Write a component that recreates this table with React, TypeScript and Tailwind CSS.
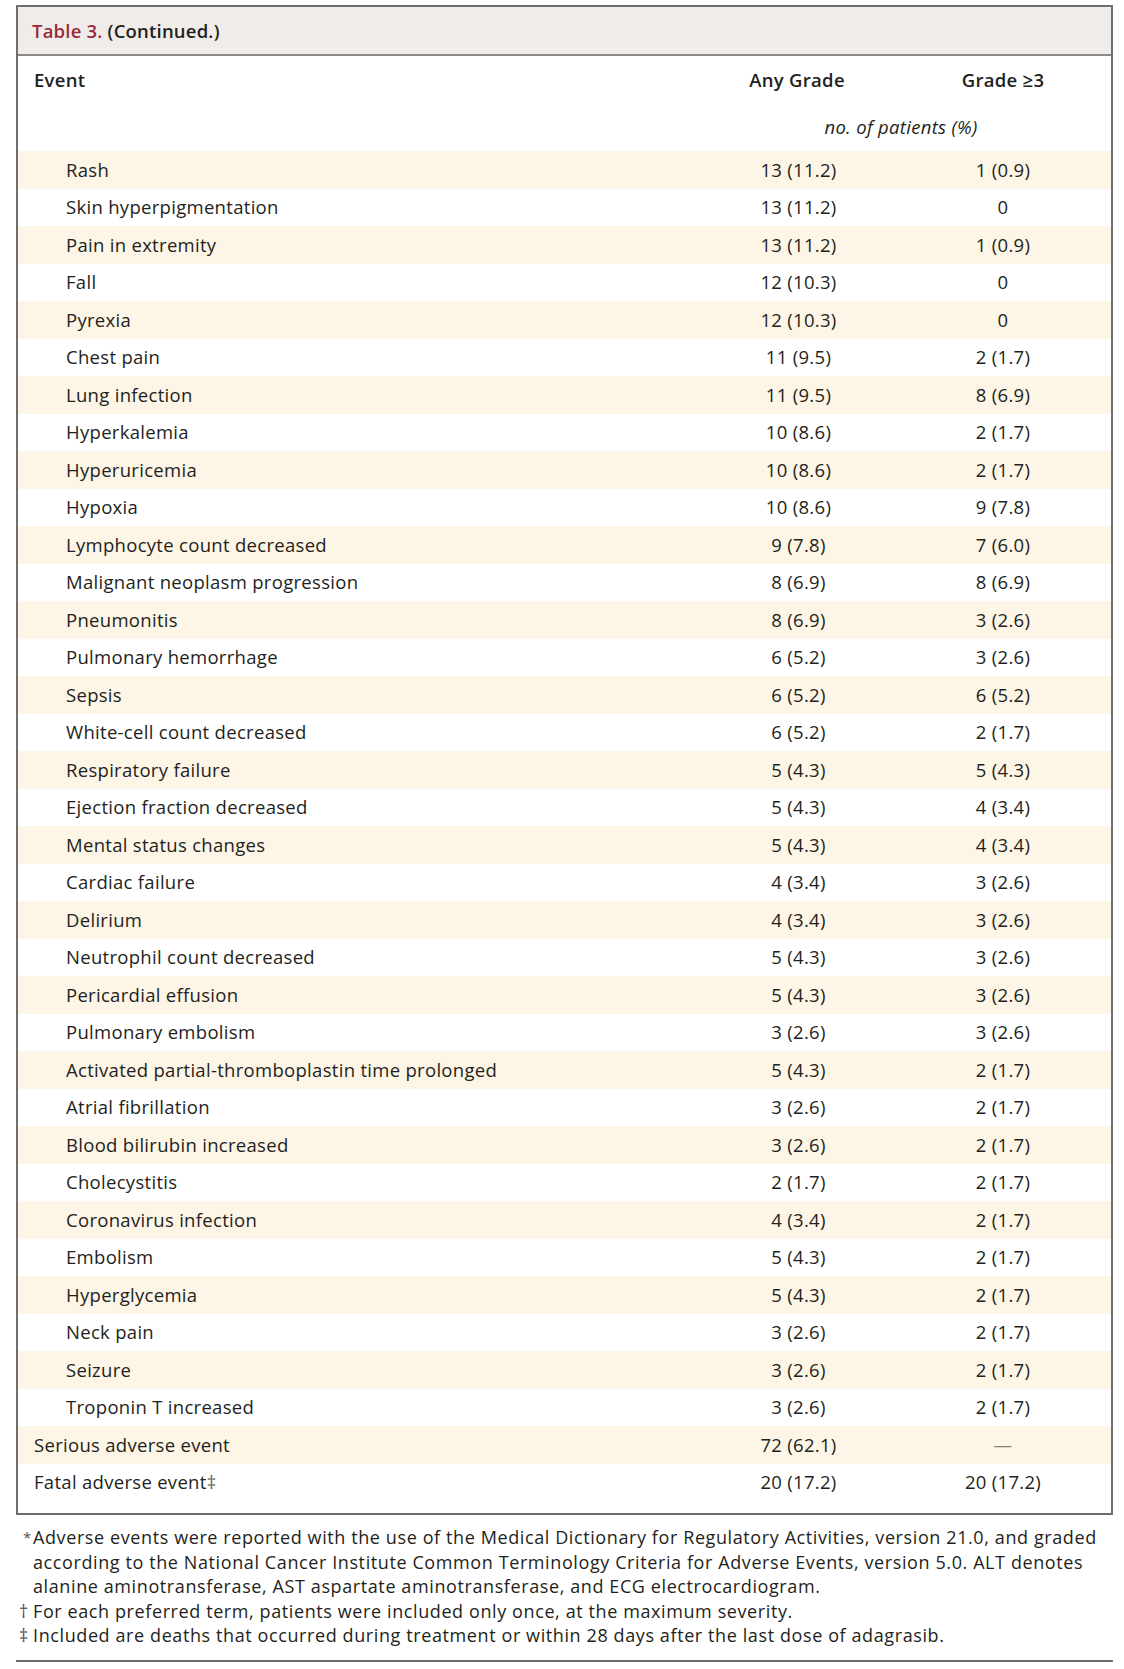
const rows: [string, string, string][] = [
  ["Rash", "13 (11.2)", "1 (0.9)"],
  ["Skin hyperpigmentation", "13 (11.2)", "0"],
  ["Pain in extremity", "13 (11.2)", "1 (0.9)"],
  ["Fall", "12 (10.3)", "0"],
  ["Pyrexia", "12 (10.3)", "0"],
  ["Chest pain", "11 (9.5)", "2 (1.7)"],
  ["Lung infection", "11 (9.5)", "8 (6.9)"],
  ["Hyperkalemia", "10 (8.6)", "2 (1.7)"],
  ["Hyperuricemia", "10 (8.6)", "2 (1.7)"],
  ["Hypoxia", "10 (8.6)", "9 (7.8)"],
  ["Lymphocyte count decreased", "9 (7.8)", "7 (6.0)"],
  ["Malignant neoplasm progression", "8 (6.9)", "8 (6.9)"],
  ["Pneumonitis", "8 (6.9)", "3 (2.6)"],
  ["Pulmonary hemorrhage", "6 (5.2)", "3 (2.6)"],
  ["Sepsis", "6 (5.2)", "6 (5.2)"],
  ["White-cell count decreased", "6 (5.2)", "2 (1.7)"],
  ["Respiratory failure", "5 (4.3)", "5 (4.3)"],
  ["Ejection fraction decreased", "5 (4.3)", "4 (3.4)"],
  ["Mental status changes", "5 (4.3)", "4 (3.4)"],
  ["Cardiac failure", "4 (3.4)", "3 (2.6)"],
  ["Delirium", "4 (3.4)", "3 (2.6)"],
  ["Neutrophil count decreased", "5 (4.3)", "3 (2.6)"],
  ["Pericardial effusion", "5 (4.3)", "3 (2.6)"],
  ["Pulmonary embolism", "3 (2.6)", "3 (2.6)"],
  ["Activated partial-thromboplastin time prolonged", "5 (4.3)", "2 (1.7)"],
  ["Atrial fibrillation", "3 (2.6)", "2 (1.7)"],
  ["Blood bilirubin increased", "3 (2.6)", "2 (1.7)"],
  ["Cholecystitis", "2 (1.7)", "2 (1.7)"],
  ["Coronavirus infection", "4 (3.4)", "2 (1.7)"],
  ["Embolism", "5 (4.3)", "2 (1.7)"],
  ["Hyperglycemia", "5 (4.3)", "2 (1.7)"],
  ["Neck pain", "3 (2.6)", "2 (1.7)"],
  ["Seizure", "3 (2.6)", "2 (1.7)"],
  ["Troponin T increased", "3 (2.6)", "2 (1.7)"],
];

function Row({ label, any, g3, striped, indent }: { label: React.ReactNode; any: string; g3: React.ReactNode; striped: boolean; indent: boolean }) {
  return (
    <div className={`grid grid-cols-[1fr_196px_216px] h-[37.5px] items-center ${striped ? "bg-[#fdf5e6]" : ""}`}>
      <div className={indent ? "pl-[48px]" : "pl-[16px]"}>{label}</div>
      <div className="text-center pl-[3px]">{any}</div>
      <div className="text-center">{g3}</div>
    </div>
  );
}

export default function App() {
  return (
    <div className="w-[1124px] h-[1669px] bg-white text-[#231f20] font-['Open_Sans',sans-serif] pt-[5px] pl-[16px]">
      <div className="w-[1097px] border-2 border-[#6e6e6e]">
        <div className="h-[49px] bg-[#f0ece9] border-b-2 border-[#8a8a8a] flex items-center pl-[14px] text-[18.5px] font-semibold tracking-[0.2px]">
          <span className="text-[#9a2a38]">Table 3.</span>
          <span className="ml-[5px]">(Continued.)</span>
        </div>
        <div className="h-[95px] text-[18.5px] tracking-[0.3px]">
          <div className="grid grid-cols-[1fr_196px_216px] pt-[10px] h-[57px] font-semibold">
            <div className="pl-[16px]">Event</div>
            <div className="text-center">Any Grade</div>
            <div className="text-center">Grade ≥3</div>
          </div>
          <div className="grid grid-cols-[1fr_412px]">
            <div />
            <div className="text-center italic pr-[8px]">no. of patients (%)</div>
          </div>
        </div>
        <div className="text-[18.5px] tracking-[0.3px] pb-[12px]">
          {rows.map((r, i) => (
            <Row key={r[0]} label={r[0]} any={r[1]} g3={r[2]} striped={i % 2 === 0} indent />
          ))}
          <Row label="Serious adverse event" any="72 (62.1)" g3={<span className="text-[#8a8070]">—</span>} striped indent={false} />
          <Row
            label={
              <span>
                Fatal adverse event<span className="text-[#666]">‡</span>
              </span>
            }
            any="20 (17.2)"
            g3="20 (17.2)"
            striped={false}
            indent={false}
          />
        </div>
      </div>
      <div className="w-[1097px] pt-[10px] pb-[12px] text-[18px] tracking-[0.6px] leading-[24.5px] border-b-2 border-[#6e6e6e]">
        <div className="flex">
          <span className="w-[17px] shrink-0 pl-[7px] text-[15px] tracking-normal text-[#555]">*</span>
          <p className="whitespace-nowrap">
            Adverse events were reported with the use of the Medical Dictionary for Regulatory Activities, version 21.0, and graded
            <br />
            according to the National Cancer Institute Common Terminology Criteria for Adverse Events, version 5.0. ALT denotes
            <br />
            alanine aminotransferase, AST aspartate aminotransferase, and ECG electrocardiogram.
          </p>
        </div>
        <div className="flex">
          <span className="w-[17px] shrink-0 pl-[3px] text-[#555]">†</span>
          <p>For each preferred term, patients were included only once, at the maximum severity.</p>
        </div>
        <div className="flex">
          <span className="w-[17px] shrink-0 pl-[3px] text-[#555]">‡</span>
          <p>Included are deaths that occurred during treatment or within 28 days after the last dose of adagrasib.</p>
        </div>
      </div>
    </div>
  );
}
